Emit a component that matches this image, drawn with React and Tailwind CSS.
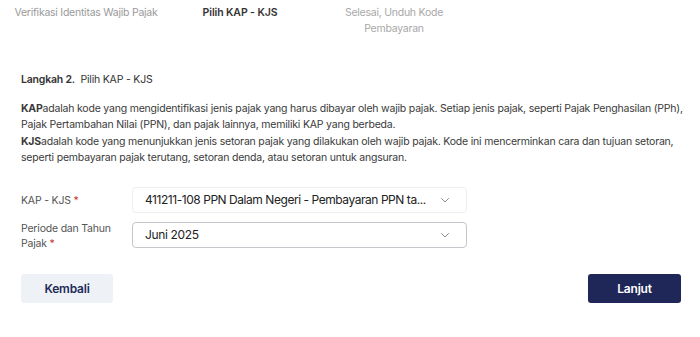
import React from "react";

function Chevron() {
  return (
    <svg width="12" height="12" viewBox="0 0 24 24" fill="none" stroke="#7a7f88" strokeWidth="1.8" strokeLinecap="round" strokeLinejoin="round">
      <path d="M5 9l7 7 7-7" />
    </svg>
  );
}

export default function App() {
  return (
    <div className="w-[700px] h-[337px] bg-white text-[#333] overflow-hidden" style={{ fontFamily: "Inter, 'Noto Sans', sans-serif" }}>
      <div className="grid grid-cols-[154px_154px_154px] pl-[9px] pt-[5px] text-[10.5px] leading-[15.5px] text-center tracking-[-0.25px]">
        <div className="text-[#9a9a9a] whitespace-nowrap">Verifikasi Identitas Wajib Pajak</div>
        <div className="font-semibold text-[#333] tracking-[-0.1px]">Pilih KAP - KJS</div>
        <div className="text-[#a8a8a8] px-[10px]">Selesai, Unduh Kode Pembayaran</div>
      </div>

      <div className="px-[21px] pt-[36px]">
        <div className="text-[10.5px] leading-[16px] tracking-[-0.2px]">
          <span className="font-semibold">Langkah 2.</span>&nbsp; Pilih KAP - KJS
        </div>

        <div className="mt-[13px] text-[10.5px] leading-[16.3px] text-[#3a3a3a] whitespace-nowrap tracking-[-0.2px]">
          <span className="font-bold">KAP</span>adalah kode yang mengidentifikasi jenis pajak yang harus dibayar oleh wajib pajak. Setiap jenis pajak, seperti Pajak Penghasilan (PPh),
          <br />
          Pajak Pertambahan Nilai (PPN), dan pajak lainnya, memiliki KAP yang berbeda.
          <br />
          <span className="font-bold">KJS</span>adalah kode yang menunjukkan jenis setoran pajak yang dilakukan oleh wajib pajak. Kode ini mencerminkan cara dan tujuan setoran,
          <br />
          seperti pembayaran pajak terutang, setoran denda, atau setoran untuk angsuran.
        </div>

        <div className="mt-[21px] flex flex-col gap-[9px]">
          <div className="flex items-center h-[26px]">
            <div className="w-[111px] text-[10.5px] leading-[15px] text-[#555] tracking-[-0.2px]">
              KAP - KJS <span className="text-[#c0392b]">*</span>
            </div>
            <div className="w-[335px] h-[26px] flex items-center justify-between pl-[12px] pr-[15px] border border-[#eeeeee] rounded-[4px] text-[12px] text-[#222] tracking-[-0.45px] whitespace-nowrap">
              <span>411211-108 PPN Dalam Negeri - Pembayaran PPN ta...</span>
              <Chevron />
            </div>
          </div>
          <div className="flex items-center h-[26px]">
            <div className="w-[111px] text-[10.5px] leading-[15px] text-[#555] tracking-[-0.2px] pt-[1px]">
              Periode dan Tahun
              <br />
              Pajak <span className="text-[#c0392b]">*</span>
            </div>
            <div className="w-[335px] h-[26px] flex items-center justify-between pl-[12px] pr-[15px] border border-[#c4c6cc] rounded-[4px] text-[12px] text-[#222] tracking-[-0.35px]">
              <span>Juni 2025</span>
              <Chevron />
            </div>
          </div>
        </div>

        <div className="mt-[26px] flex justify-between">
          <button className="w-[92px] h-[29px] rounded-[3px] bg-[#eef2f6] text-[#1f2a5a] text-[12px] font-semibold tracking-[-0.2px]">Kembali</button>
          <button className="w-[93px] h-[29px] rounded-[3px] bg-[#1f2658] text-white text-[12px] font-semibold mr-[-2px] tracking-[-0.2px]">Lanjut</button>
        </div>
      </div>
    </div>
  );
}
